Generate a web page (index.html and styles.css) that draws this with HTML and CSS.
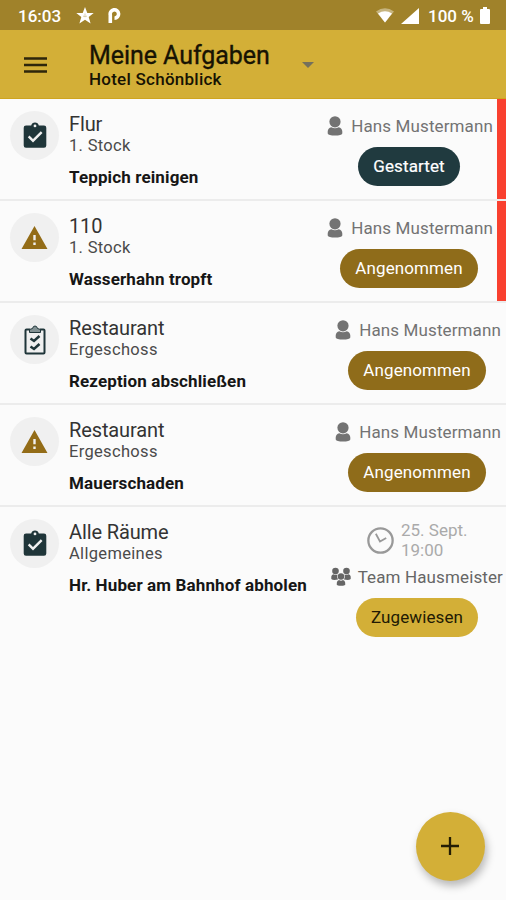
FILE: index.html
```html
<!DOCTYPE html>
<html lang="de">
<head>
<meta charset="utf-8">
<title>Meine Aufgaben</title>
<link rel="stylesheet" href="styles.css">
</head>
<body>
<svg class="defs" aria-hidden="true">
  <symbol id="task" viewBox="0 0 24 26"><path fill-rule="evenodd" d="M3 3.500H8.200a3.900 3.900 0 0 1 7.600 0H21a2.300 2.300 0 0 1 2.300 2.300V23.500a2.300 2.300 0 0 1-2.300 2.300H3A2.300 2.300 0 0 1 .7 23.500V5.800A2.300 2.300 0 0 1 3 3.500ZM12 2.500a1.400 1.400 0 1 0 0 2.800a1.400 1.400 0 0 0 0-2.800ZM10 20.500L19.500 11L17.800 9.300L10 17.100L6.500 13.600L4.800 15.300Z"/></symbol>
  <symbol id="warning" viewBox="0 0 26 23"><path fill-rule="evenodd" d="M13 0L26 23H0ZM11.800 9V14.200H14.200V9ZM11.800 16.500V19H14.200V16.500Z"/></symbol>
  <symbol id="checklist" viewBox="0 0 22 30"><path d="M6 4.500H2.500Q1.500 4.500 1.500 5.500V27.500Q1.500 28.500 2.500 28.500H19.500Q20.500 28.500 20.500 27.500V5.500Q20.500 4.500 19.500 4.500H16" fill="none" stroke="#1f3539" stroke-width="2"/><path d="M5.500 7.500V4.500L8.500 3.500Q9 1 11 1T13.500 3.500L16.500 4.500V7.500Z" fill="#829193" stroke="#1f3539"/><path d="M6.500 13.500L10 16L15.500 11M6.500 21.500L10 24L15.500 19" fill="none" stroke="#1f3539" stroke-width="2.500"/></symbol>
  <symbol id="person" viewBox="0 0 16 20"><circle cx="8" cy="5.800" r="5.600"/><path d="M.7 17.500V15.500Q.9 12 4.300 11.200Q8 13.300 11.700 11.200Q15.100 12 15.300 15.500V17.500Q14.500 19.500 8 19.500T.7 17.500Z"/></symbol>
  <symbol id="team" viewBox="0 0 20 20"><circle cx="4.500" cy="4" r="3.300"/><circle cx="15.500" cy="4" r="3.300"/><path d="M.3 12V9.500Q.6 7.500 2.500 7.200Q4.500 8.300 6.500 7.500Q5.500 10 7 12.500Q2 13.500.3 12ZM19.700 12V9.500Q19.400 7.500 17.500 7.200Q15.500 8.300 13.500 7.500Q14.500 10 13 12.500Q18 13.500 19.700 12Z"/><circle cx="10" cy="9.500" r="3.200"/><path d="M5.800 18V15.700Q6 13.500 8 13Q10 14.300 12 13Q14 13.500 14.200 15.700V18Q10 19.700 5.800 18Z"/></symbol>
</svg>
<div class="screen">
  <div class="status">
    <span class="time">16:03</span>
    <svg class="star" viewBox="0 0 18 17"><path d="M9 0L11.300 6H17.700L12.700 10L14.600 16.500L9 12.700L3.400 16.500L5.300 10L.3 6H6.700Z" fill="#fff"/><path d="M9 6.500V9.300M7 9L9 9.800L11 9" stroke="#c9b98a" fill="none" stroke-width=".7"/></svg>
    <svg class="parking" viewBox="0 0 13 15"><path d="M2.300 15V7A4.200 4.200 0 1 1 6.500 10.200" fill="none" stroke="#fff" stroke-width="3.600"/></svg>
    <svg class="wifi" viewBox="0 0 18 15"><path d="M0 3.500Q9-3 18 3.500L9 14.500Z" fill="#c6b47e"/><path d="M2 5.500Q9 1 16 5.500L9 14.500Z" fill="#fff"/></svg>
    <svg class="signal" viewBox="0 0 18 16"><path d="M18 0V16H0Z" fill="#fff"/></svg>
    <span class="percent">100 %</span>
    <svg class="battery" viewBox="0 0 10 17"><path d="M3 0H7V2H9Q10 2 10 3V16Q10 17 9 17H1Q0 17 0 16V3Q0 2 1 2H3Z" fill="#fff"/></svg>
  </div>
  <header class="bar">
    <svg class="menu" viewBox="0 0 23 16"><path d="M0 1.500H23M0 8H23M0 14.500H23" stroke="#2e260b" stroke-width="2.400"/></svg>
    <div class="heading"><h1>Meine Aufgaben</h1><p>Hotel Schönblick</p></div>
    <svg class="caret" viewBox="0 0 12 6"><path d="M0 0H12L6 6Z" fill="#74705c"/></svg>
  </header>
  <main>
    <article class="row urgent">
      <div class="avatar"><svg class="i-task"><use href="#task"/></svg></div>
      <div class="info"><h2>Flur</h2><p class="place">1. Stock</p><p class="todo">Teppich reinigen</p></div>
      <div class="side"><div class="who"><svg class="i-person"><use href="#person"/></svg><span>Hans Mustermann</span></div><span class="pill started">Gestartet</span></div>
    </article>
    <article class="row urgent">
      <div class="avatar"><svg class="i-warning"><use href="#warning"/></svg></div>
      <div class="info"><h2>110</h2><p class="place">1. Stock</p><p class="todo">Wasserhahn tropft</p></div>
      <div class="side"><div class="who"><svg class="i-person"><use href="#person"/></svg><span>Hans Mustermann</span></div><span class="pill accepted">Angenommen</span></div>
    </article>
    <article class="row">
      <div class="avatar"><svg class="i-checklist"><use href="#checklist"/></svg></div>
      <div class="info"><h2>Restaurant</h2><p class="place">Ergeschoss</p><p class="todo">Rezeption abschließen</p></div>
      <div class="side"><div class="who"><svg class="i-person"><use href="#person"/></svg><span>Hans Mustermann</span></div><span class="pill accepted">Angenommen</span></div>
    </article>
    <article class="row">
      <div class="avatar"><svg class="i-warning"><use href="#warning"/></svg></div>
      <div class="info"><h2>Restaurant</h2><p class="place">Ergeschoss</p><p class="todo">Mauerschaden</p></div>
      <div class="side"><div class="who"><svg class="i-person"><use href="#person"/></svg><span>Hans Mustermann</span></div><span class="pill accepted">Angenommen</span></div>
    </article>
    <article class="row last">
      <div class="avatar"><svg class="i-task"><use href="#task"/></svg></div>
      <div class="info"><h2>Alle Räume</h2><p class="place">Allgemeines</p><p class="todo">Hr. Huber am Bahnhof abholen</p></div>
      <div class="side">
        <div class="due"><svg class="i-clock" viewBox="0 0 26 26"><circle cx="13" cy="13" r="11.700" fill="none" stroke="#999" stroke-width="2.200"/><path d="M8.500 6.500L12.500 14L18.500 10.500" fill="none" stroke="#999" stroke-width="1.700"/></svg><span>25. Sept.<br>19:00</span></div>
        <div class="who"><svg class="i-team"><use href="#team"/></svg><span>Team Hausmeister</span></div>
        <span class="pill assigned">Zugewiesen</span>
      </div>
    </article>
  </main>
  <button class="fab" aria-label="Neue Aufgabe"><svg viewBox="0 0 18 18"><path d="M9 0V18M0 9H18" stroke="#241d05" stroke-width="2.300"/></svg></button>
</div>
</body>
</html>
```

FILE: styles.css
```css
* { box-sizing: border-box; }
body { margin: 0; font-family: Roboto, "Liberation Sans", sans-serif; background: #fbfbfb; }
h1, h2, p { margin: 0; font-weight: 400; white-space: nowrap; }
svg { display: block; flex: none; }
.defs { position: absolute; width: 0; height: 0; }
.screen { position: relative; width: 506px; height: 900px; overflow: hidden; background: #fbfbfb; }

.status { display: flex; align-items: center; height: 30px; padding: 1px 16px 0 18px; background: #a0822a; color: #fff; font-size: 17px; font-weight: 500; line-height: 28px; }
.time { width: 58px; }
.star { width: 18px; height: 17px; }
.parking { width: 13px; height: 15px; margin-left: 14px; }
.wifi { width: 18px; height: 15px; margin-left: auto; }
.signal { width: 18px; height: 16px; margin-left: 7px; }
.percent { width: 46px; margin-left: 9px; white-space: nowrap; }
.battery { width: 10px; height: 17px; margin-left: 6px; }

.bar { display: flex; align-items: flex-start; height: 69px; padding-left: 24px; background: #d3af37; border-bottom: 1px solid #cfa520; color: #171303; }
.menu { width: 23px; height: 16px; margin-top: 27px; }
.heading { width: 213px; margin-left: 42px; padding-top: 12px; }
h1 { font-size: 25px; line-height: 27px; letter-spacing: -.06px; -webkit-text-stroke: .35px #171303; }
.heading p { font-size: 17px; font-weight: 500; line-height: 20px; letter-spacing: .25px; }
.caret { width: 12px; height: 6px; margin-top: 32px; }

.row { display: flex; height: 102px; padding-left: 10px; border-bottom: 2px solid #ececec; }
.urgent .side { border-right: 9px solid #f9402f; padding-right: 4px; }
.row.last { height: 140px; border-bottom: 0; }
.avatar { display: flex; align-items: center; justify-content: center; flex: none; width: 49px; height: 49px; margin-top: 12px; border-radius: 50%; background: #f0f0f0; }
.i-task { width: 24px; height: 26px; fill: #1f3539; margin-top: -2px; }
.i-warning { width: 27px; height: 23px; fill: #936c17; }
.i-checklist { width: 22px; height: 30px; }
.info { flex: 1; min-width: 0; margin-left: 10px; padding-top: 13px; color: #333; }
h2 { font-size: 20px; line-height: 24px; letter-spacing: -.12px; }
.place { font-size: 16.500px; line-height: 20px; letter-spacing: .32px; color: #4a4a4a; }
.todo { margin-top: 11px; font-size: 17px; font-weight: 700; line-height: 20px; letter-spacing: .13px; color: #161616; }
.side { display: flex; flex-direction: column; align-items: flex-end; flex: none; padding: 17px 5px 0 0; color: #737373; }
.who { display: flex; align-items: center; height: 20px; font-size: 17px; letter-spacing: .12px; white-space: nowrap; }
.i-person { width: 16px; height: 20px; margin-right: 8px; fill: #737373; }
.i-team { width: 20px; height: 20px; margin-right: 7px; fill: #666; }
.pill { width: 138px; height: 39px; margin: 11px 15px 0 0; border-radius: 20px; font-size: 17px; line-height: 39px; letter-spacing: .1px; text-align: center; color: #fff; }
.started { width: 102px; margin-right: 33px; background: #203a3f; -webkit-text-stroke: .2px #fff; }
.accepted { background: #8f6c1a; }
.assigned { width: 122px; margin-right: 25px; background: #d3af37; color: #211a04; }
.last .side { padding: 14px 3px 0 0; }
.last .who { margin-top: 7px; color: #666; }
.due { display: flex; align-items: center; width: 136px; font-size: 17px; line-height: 19.500px; color: #aaa; }
.i-clock { width: 27px; height: 27px; margin-right: 7px; }
.fab { position: absolute; left: 416px; top: 812px; display: flex; align-items: center; justify-content: center; width: 69px; height: 69px; padding: 0 1px 1px 0; border: 0; border-radius: 50%; background: #d3af37; box-shadow: 2px 5px 9px rgba(0,0,0,.27); }
.fab svg { width: 18px; height: 18px; }
```
